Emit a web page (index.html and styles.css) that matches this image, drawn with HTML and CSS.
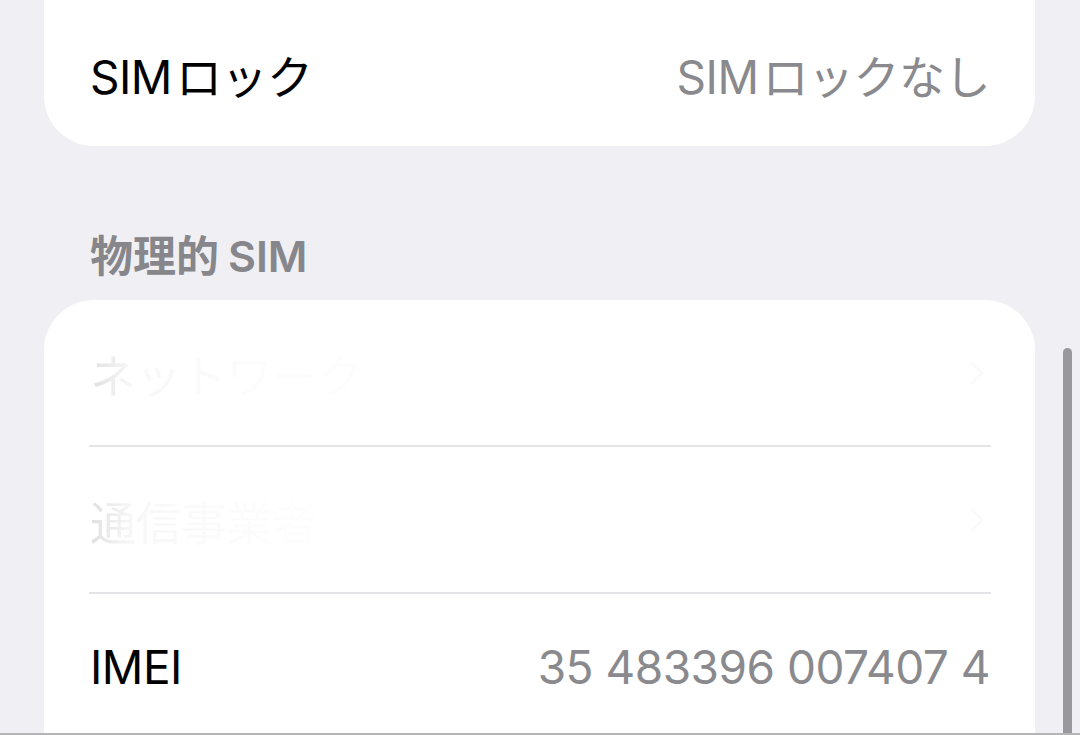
FILE: index.html
```html
<!DOCTYPE html>
<html lang="ja">
<head>
<meta charset="utf-8">
<title>SIM</title>
<link rel="stylesheet" href="styles.css">
</head>
<body>
<main class="screen">
  <section class="group group-top">
    <div class="card card-cut">
      <div class="row">
        <span class="label"><span class="latin">SIM</span>ロック</span>
        <span class="value"><span class="latin">SIM</span>ロックなし</span>
      </div>
    </div>
  </section>

  <section class="group">
    <h2 class="group-title">物理的<span class="latin-after">SIM</span></h2>
    <div class="card card-open">
      <div class="row row-loading">
        <span class="label shimmer">ネットワーク</span>
        <span class="chevron">
          <svg width="14" height="24" viewBox="0 0 14 24"><path d="M2 2l10 10L2 22" fill="none" stroke="currentColor" stroke-width="3" stroke-linecap="round" stroke-linejoin="round"/></svg>
        </span>
      </div>
      <div class="divider"></div>
      <div class="row row-loading">
        <span class="label shimmer">通信事業者</span>
        <span class="chevron">
          <svg width="14" height="24" viewBox="0 0 14 24"><path d="M2 2l10 10L2 22" fill="none" stroke="currentColor" stroke-width="3" stroke-linecap="round" stroke-linejoin="round"/></svg>
        </span>
      </div>
      <div class="divider"></div>
      <div class="row">
        <span class="label">IMEI</span>
        <span class="value">35 483396 007407 4</span>
      </div>
      <div class="divider"></div>
      <div class="row"></div>
    </div>
  </section>

  <div class="scroll-indicator"></div>
  <div class="bottom-edge"></div>
</main>
</body>
</html>
```

FILE: styles.css
```css
html, body {
  margin: 0;
  padding: 0;
}

body {
  background: #efeff4;
  font-family: Inter, "Noto Sans CJK JP", sans-serif;
  color: #000;
  overflow: hidden;
}

.screen {
  position: relative;
  width: 1080px;
  height: 735px;
  overflow: hidden;
}

.group {
  display: flex;
  flex-direction: column;
  padding: 0 45px 0 44px;
}

.group-top {
  margin-top: -60px;
}

.card {
  background: #fff;
  border-radius: 50px;
  overflow: hidden;
}

.card-cut {
  padding-top: 61px;
}

.row {
  height: 145px;
  display: flex;
  align-items: center;
  justify-content: space-between;
  padding: 0 45px 0 46px;
}

.label,
.value {
  font-size: 46px;
  letter-spacing: -0.5px;
}

.label {
  color: #000;
}

.value {
  color: #8a8a8e;
}

/* gap between Latin letters and the kana that follow */
.latin {
  margin-right: 4px;
}

.latin-after {
  margin-left: 9px;
}

.group-title {
  margin: 86px 0 20px 46px;
  font-size: 43px;
  line-height: 48px;
  font-weight: 600;
  color: #86868b;
  letter-spacing: 0;
}

.divider {
  height: 2px;
  background: #e4e4e6;
  margin: 0 44px 0 45px;
}

/* rows still loading: faint placeholder text */
.shimmer {
  background: linear-gradient(90deg, rgba(0,0,0,0.12) 0px, rgba(0,0,0,0.03) 40px, rgba(0,0,0,0.012) 160px, rgba(0,0,0,0.008) 100%);
  -webkit-background-clip: text;
  background-clip: text;
  color: transparent;
}

.chevron {
  color: rgba(0,0,0,0.018);
  display: flex;
  margin-right: 6px;
}

.scroll-indicator {
  position: absolute;
  left: 1063px;
  top: 348px;
  width: 9px;
  height: 400px;
  border-radius: 5px;
  background: #98989d;
}

.bottom-edge {
  position: absolute;
  left: 0;
  right: 0;
  bottom: 0;
  height: 2px;
  background: #b4b4b6;
}
```
